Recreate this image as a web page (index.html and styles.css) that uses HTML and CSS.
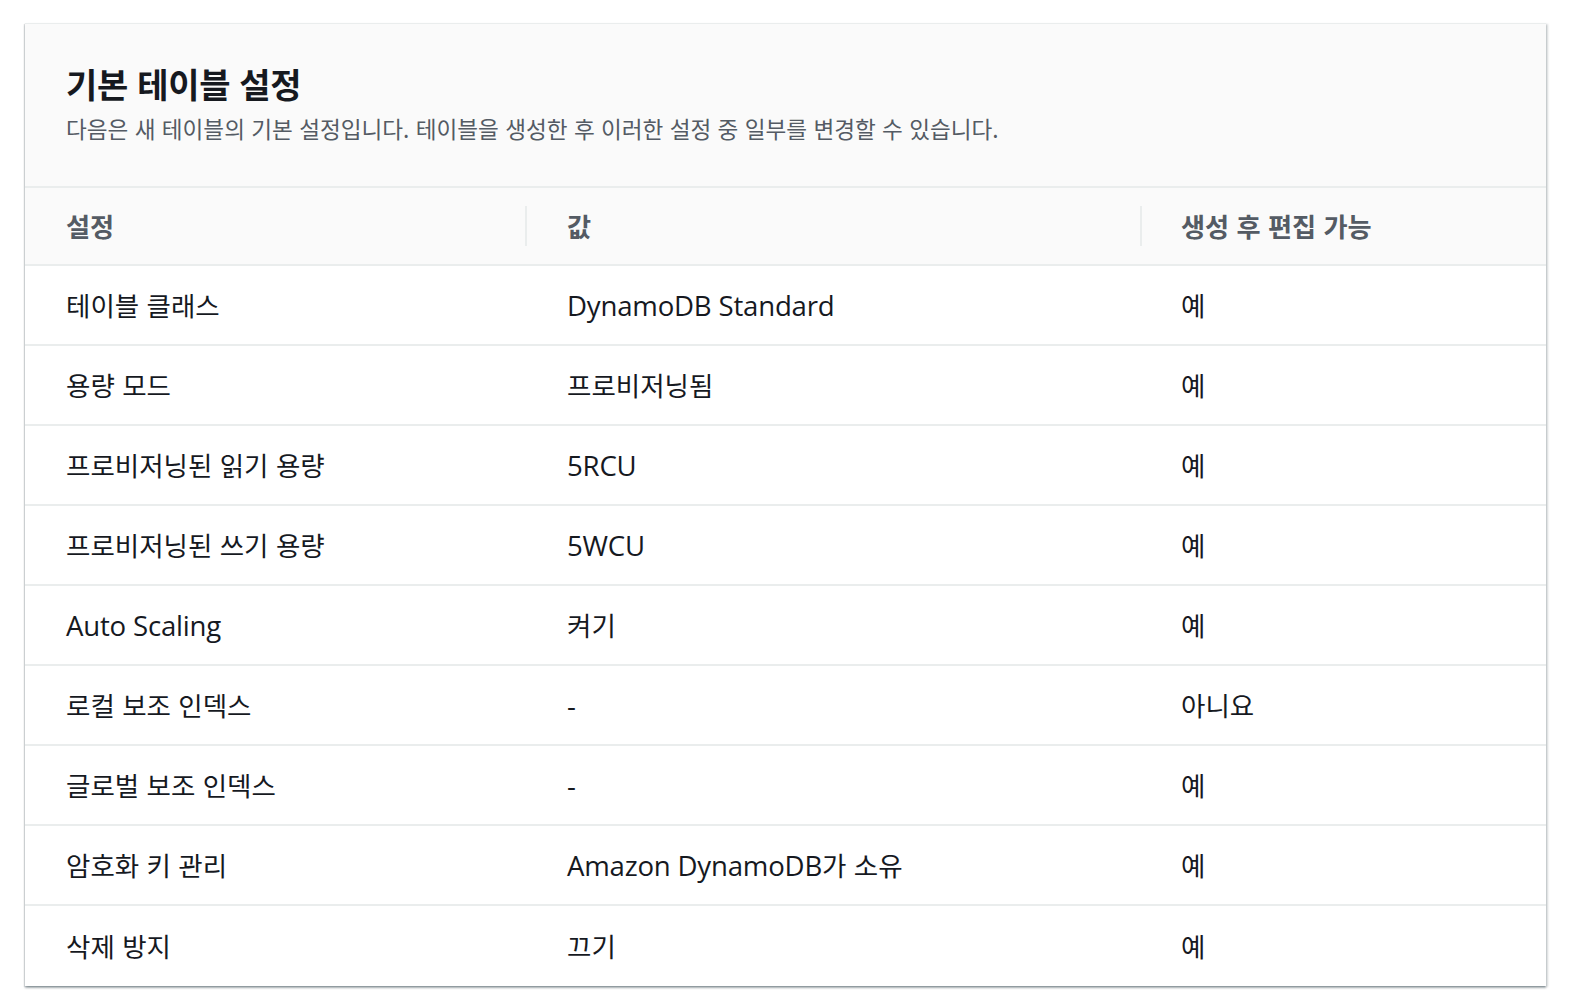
FILE: index.html
```html
<!DOCTYPE html>
<html lang="ko">
<head>
<meta charset="utf-8">
<title>기본 테이블 설정</title>
<link rel="stylesheet" href="styles.css">
</head>
<body>
<section class="card">
  <header class="card-head">
    <h2 class="title">기본 테이블 설정</h2>
    <p class="desc">다음은 새 테이블의 기본 설정입니다. 테이블을 생성한 후 이러한 설정 중 일부를 변경할 수 있습니다.</p>
  </header>
  <div class="table">
    <div class="row head">
      <div class="cell">설정</div>
      <div class="cell sep">값</div>
      <div class="cell sep">생성 후 편집 가능</div>
    </div>
    <div class="row">
      <div class="cell">테이블 클래스</div>
      <div class="cell"><span class="en">DynamoDB Standard</span></div>
      <div class="cell">예</div>
    </div>
    <div class="row">
      <div class="cell">용량 모드</div>
      <div class="cell">프로비저닝됨</div>
      <div class="cell">예</div>
    </div>
    <div class="row">
      <div class="cell">프로비저닝된 읽기 용량</div>
      <div class="cell"><span class="en">5RCU</span></div>
      <div class="cell">예</div>
    </div>
    <div class="row">
      <div class="cell">프로비저닝된 쓰기 용량</div>
      <div class="cell"><span class="en">5WCU</span></div>
      <div class="cell">예</div>
    </div>
    <div class="row">
      <div class="cell"><span class="en">Auto Scaling</span></div>
      <div class="cell">켜기</div>
      <div class="cell">예</div>
    </div>
    <div class="row">
      <div class="cell">로컬 보조 인덱스</div>
      <div class="cell"><span class="en">-</span></div>
      <div class="cell">아니요</div>
    </div>
    <div class="row">
      <div class="cell">글로벌 보조 인덱스</div>
      <div class="cell"><span class="en">-</span></div>
      <div class="cell">예</div>
    </div>
    <div class="row">
      <div class="cell">암호화 키 관리</div>
      <div class="cell"><span class="en">Amazon DynamoDB</span>가 소유</div>
      <div class="cell">예</div>
    </div>
    <div class="row last">
      <div class="cell">삭제 방지</div>
      <div class="cell">끄기</div>
      <div class="cell">예</div>
    </div>
  </div>
</section>
</body>
</html>
```

FILE: styles.css
```css
html, body {
  margin: 0;
  padding: 0;
  background: #ffffff;
}

body {
  font-family: "Noto Sans CJK KR", "Open Sans", sans-serif;
  color: #16191f;
}

.card {
  margin: 23px 28px 20px 25px;
  background: #ffffff;
  border-top: 1px solid #eaeded;
  box-shadow: 0 2px 2px 0 rgba(0, 28, 36, 0.3),
              2px 1px 2px 0 rgba(0, 28, 36, 0.15),
              -1px 1px 1px 0 rgba(0, 28, 36, 0.12);
}

.card-head {
  background: #fafafa;
  padding: 40px 40px 0 41px;
  height: 122px;
  border-bottom: 2px solid #eaeded;
}

.title {
  margin: 0;
  font-size: 34px;
  line-height: 40px;
  font-weight: 700;
  color: #16191f;
  letter-spacing: -0.3px;
}

.desc {
  margin: 10px 0 0;
  font-size: 22.6px;
  line-height: 30px;
  color: #545b64;
  font-weight: 400;
}

.table {
  display: flex;
  flex-direction: column;
}

.row {
  display: grid;
  grid-template-columns: 500px 615px 1fr;
  height: 78px;
  border-bottom: 2px solid #eaeded;
  align-items: center;
  font-size: 26.5px;
  line-height: 36px;
}

.row.last {
  height: 80px;
  border-bottom: none;
}

.row.head {
  height: 76px;
  background: #fafafa;
  font-weight: 700;
  color: #545b64;
  font-size: 26.2px;
}

.cell {
  padding-left: 41px;
  white-space: nowrap;
  position: relative;
}

.cell:nth-child(2) {
  padding-left: 42px;
}

.cell.sep::before {
  content: "";
  position: absolute;
  left: 0;
  top: -2px;
  width: 2px;
  height: 40px;
  background: #eaeded;
}

.en {
  font-family: "Open Sans", "Noto Sans CJK KR", sans-serif;
  font-size: 27.6px;
  letter-spacing: -0.2px;
}
```
